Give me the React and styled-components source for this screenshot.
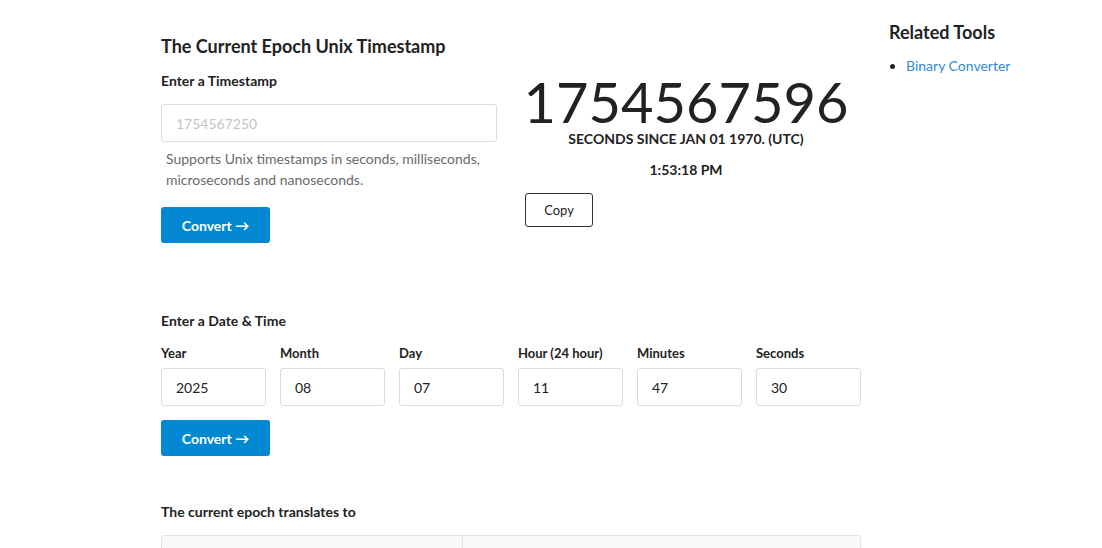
import React from 'react'
import styled, { createGlobalStyle } from 'styled-components'

const Global = createGlobalStyle`
	body {
		margin: 0;
		background: #fff;
		font-family: Lato, "Open Sans", sans-serif;
		color: #222;
	}
`

const Page = styled.div`
	display: flex;
	gap: 28px;
	padding-left: 161px;
	height: 548px;
	overflow: hidden;
`

const Main = styled.main`
	width: 700px;
	padding-top: 35px;
`

const Title = styled.h1`
	margin: 0 0 16px;
	font-size: 18px;
	line-height: 22px;
	font-weight: 700;
`

const Split = styled.div`
	display: grid;
	grid-template-columns: 350px 350px;
	align-items: start;
`

const Label = styled.label`
	display: block;
	font-size: ${props => props.size || 13}px;
	line-height: 16px;
	font-weight: 700;
	margin-bottom: ${props => props.gap || 7}px;
`

const TextInput = styled.input`
	box-sizing: border-box;
	width: ${props => props.width || '100%'};
	height: 38px;
	padding: 0 14px;
	border: 1px solid #dcdcdc;
	border-radius: 3px;
	font-family: inherit;
	font-size: 14px;
	color: #222;
	outline: none;

	&::placeholder {
		color: #c4c4c4;
	}
`

const Help = styled.p`
	margin: 6px 0 17px 5px;
	font-size: 14px;
	line-height: 21px;
	color: #6a6a6a;
`

const Convert = styled.button`
	width: 109px;
	height: 36px;
	border: none;
	border-radius: 3px;
	background: #0288d1;
	color: #fff;
	font-family: inherit;
	font-size: 14px;
	font-weight: 700;
`

const Clock = styled.div`
	text-align: center;
`

const BigNumber = styled.div`
	font-size: 56px;
	line-height: 50px;
	font-weight: 400;
	margin: 4px 0 4px;
`

const Caption = styled.div`
	font-size: 14px;
	line-height: 16px;
	font-weight: 700;
	margin-top: ${props => props.top || 0}px;
`

const CopyButton = styled.button`
	display: block;
	margin: 15px 0 0 14px;
	width: 68px;
	height: 34px;
	background: #fff;
	border: 1px solid #333;
	border-radius: 3px;
	font-family: inherit;
	font-size: 13px;
	color: #222;
`

const Section = styled.section`
	margin-top: ${props => props.top}px;
`

const Fields = styled.div`
	display: grid;
	grid-template-columns: repeat(6, 1fr);
	gap: 14px;
	margin: 16px 0 14px;
`

const Table = styled.div`
	display: grid;
	grid-template-columns: 300px 1fr;
	margin-top: 15px;
	height: 40px;
	border: 1px solid #e2e2e2;
	border-radius: 3px 3px 0 0;
	background: #f8f9fa;
`

const Cell = styled.div`
	& + & {
		border-left: 1px solid #e2e2e2;
	}
`

const Sidebar = styled.aside`
	padding-top: 21px;
	width: 185px;
`

const SideTitle = styled.h2`
	margin: 0 0 14px;
	font-size: 18px;
	line-height: 22px;
	font-weight: 700;
`

const Links = styled.ul`
	margin: 0;
	padding-left: 17px;
	font-size: 14px;
	line-height: 18px;
`

const Link = styled.a`
	color: #2f8bd8;
	text-decoration: none;
`

const fields = [
	['Year', '2025'],
	['Month', '08'],
	['Day', '07'],
	['Hour (24 hour)', '11'],
	['Minutes', '47'],
	['Seconds', '30'],
]

const App = () => (
	<Page>
		<Global />
		<Main>
			<Title>The Current Epoch Unix Timestamp</Title>
			<Split>
				<div>
					<Label size={14} gap={15}>Enter a Timestamp</Label>
					<TextInput width="336px" placeholder="1754567250" />
					<Help>Supports Unix timestamps in seconds, milliseconds,<br />microseconds and nanoseconds.</Help>
					<Convert>Convert →</Convert>
				</div>
				<Clock>
					<BigNumber>1754567596</BigNumber>
					<Caption>SECONDS SINCE JAN 01 1970. (UTC)</Caption>
					<Caption top={15}>1:53:18 PM</Caption>
					<CopyButton>Copy</CopyButton>
				</Clock>
			</Split>
			<Section top={70}>
				<Label size={14}>Enter a Date &amp; Time</Label>
				<Fields>
					{fields.map(([name, value]) => (
						<div key={name}>
							<Label>{name}</Label>
							<TextInput defaultValue={value} />
						</div>
					))}
				</Fields>
				<Convert>Convert →</Convert>
			</Section>
			<Section top={48}>
				<Label size={14}>The current epoch translates to</Label>
				<Table>
					<Cell />
					<Cell />
				</Table>
			</Section>
		</Main>
		<Sidebar>
			<SideTitle>Related Tools</SideTitle>
			<Links>
				<li><Link href="#binary">Binary Converter</Link></li>
			</Links>
		</Sidebar>
	</Page>
)

export default App
